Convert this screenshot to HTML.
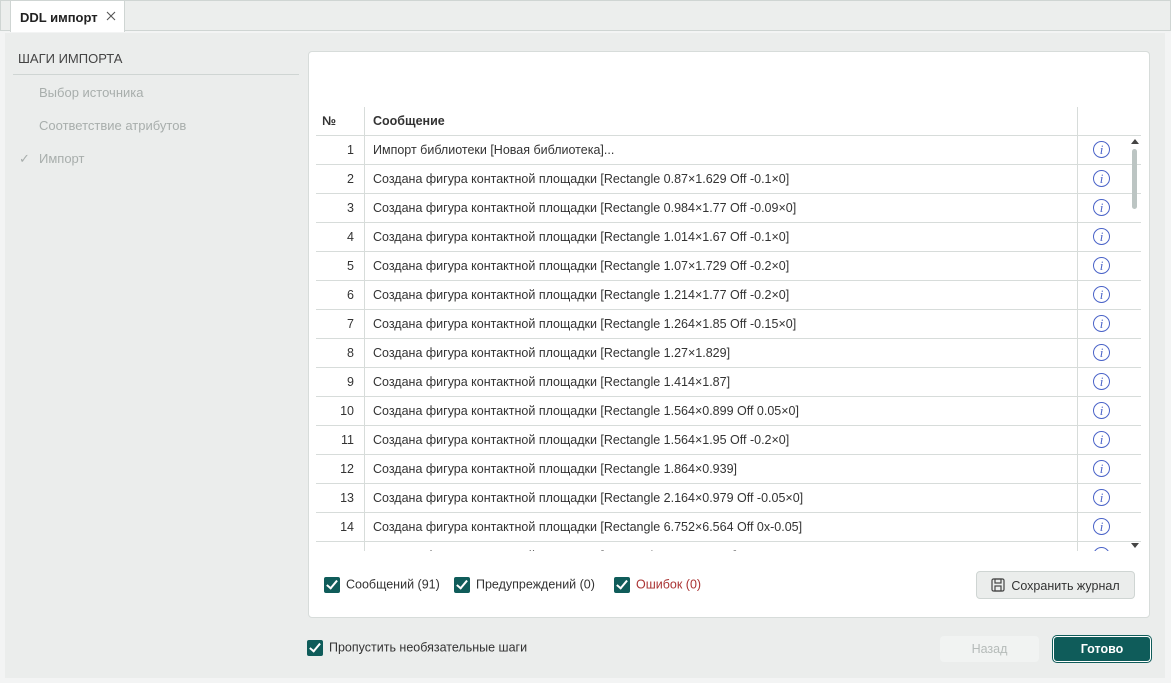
<!DOCTYPE html>
<html><head><meta charset="utf-8"><style>
*{box-sizing:border-box;margin:0;padding:0}
body{width:1171px;height:683px;background:#f3f4f4;font-family:"Liberation Sans",sans-serif;font-size:12.5px;color:#333;position:relative;overflow:hidden}
.tabbar{position:absolute;left:0;top:0;width:1171px;height:31px;background:#eceeed;border:1px solid #cfd5d3}
.tab{position:absolute;left:9px;top:0;width:115px;height:31px;background:#fff;border-left:1px solid #cfd5d3;border-right:1px solid #cfd5d3;font-weight:bold;font-size:13px;color:#222;padding:9px 0 0 9px}
.tab svg{position:absolute;left:95px;top:10px}
.main{position:absolute;left:5px;top:33px;width:1160px;height:645px;background:#ebedec}
.steps{position:absolute;left:18px;top:51px;font-size:13px;color:#444}
.line{position:absolute;left:13px;top:74px;width:286px;height:1px;background:#cfd5d3}
.step{position:absolute;left:39px;font-size:13px;color:#a8aeac}
.panel{position:absolute;left:308px;top:51px;width:842px;height:567px;background:#fff;border:1px solid #d7dcda;border-radius:4px}
.clip{position:absolute;left:316px;top:107px;width:825px;height:444px;overflow:hidden}
.r{position:relative;height:29px;border-bottom:1px solid #d7dcda;white-space:nowrap;line-height:28px}
.r.h{height:29px;font-weight:bold}
.n{position:absolute;left:0;top:0;width:49px;height:100%;text-align:right;padding-right:10px;border-right:1px solid #d7dcda}
.h .n{text-align:left;padding-left:6px}
.m{position:absolute;left:57px;top:0}
.vl{position:absolute;left:761px;top:0;width:1px;height:100%;background:#d7dcda}
.i{position:absolute;left:777px;top:5px;width:17px;height:17px;border:1px solid #4a63c8;border-radius:50%;font:italic 13px "Liberation Serif",serif;color:#4a63c8;text-align:center;line-height:16px}
.sb{position:absolute;left:1132px;top:149px;width:5px;height:60px;background:#bcc5c3;border-radius:3px}
.cb{display:inline-block;width:16px;height:16px;background:#0f5c5a;border-radius:2px;vertical-align:middle;position:relative}
.cb:after{content:"";position:absolute;left:5px;top:1px;width:4px;height:9px;border:solid #fff;border-width:0 2px 2px 0;transform:rotate(40deg)}
.chk{position:absolute;top:577px;font-size:12.5px}
.chk .cb{margin-right:6px}
.btn{position:absolute;border-radius:4px;font-size:12.5px;text-align:center}
</style></head><body>
<div class="tabbar"><div class="tab">DDL импорт<svg width="10" height="10" viewBox="0 0 10 10"><path d="M1 1L9 9M9 1L1 9" stroke="#555" stroke-width="1.1"/></svg></div></div>
<div class="main"></div>
<div class="steps">ШАГИ ИМПОРТА</div>
<div class="line"></div>
<div class="step" style="top:85px">Выбор источника</div>
<div class="step" style="top:118px">Соответствие атрибутов</div>
<div class="step" style="top:151px"><span style="position:absolute;left:-20px">✓</span>Импорт</div>
<div class="panel"></div>
<div class="clip">
<div class="r h"><span class="n">№</span><span class="m">Сообщение</span><span class="vl"></span></div>
<div class="r"><span class="n">1</span><span class="m">Импорт библиотеки [Новая библиотека]...</span><span class="vl"></span><span class="i">i</span></div>
<div class="r"><span class="n">2</span><span class="m">Создана фигура контактной площадки [Rectangle 0.87×1.629 Off -0.1×0]</span><span class="vl"></span><span class="i">i</span></div>
<div class="r"><span class="n">3</span><span class="m">Создана фигура контактной площадки [Rectangle 0.984×1.77 Off -0.09×0]</span><span class="vl"></span><span class="i">i</span></div>
<div class="r"><span class="n">4</span><span class="m">Создана фигура контактной площадки [Rectangle 1.014×1.67 Off -0.1×0]</span><span class="vl"></span><span class="i">i</span></div>
<div class="r"><span class="n">5</span><span class="m">Создана фигура контактной площадки [Rectangle 1.07×1.729 Off -0.2×0]</span><span class="vl"></span><span class="i">i</span></div>
<div class="r"><span class="n">6</span><span class="m">Создана фигура контактной площадки [Rectangle 1.214×1.77 Off -0.2×0]</span><span class="vl"></span><span class="i">i</span></div>
<div class="r"><span class="n">7</span><span class="m">Создана фигура контактной площадки [Rectangle 1.264×1.85 Off -0.15×0]</span><span class="vl"></span><span class="i">i</span></div>
<div class="r"><span class="n">8</span><span class="m">Создана фигура контактной площадки [Rectangle 1.27×1.829]</span><span class="vl"></span><span class="i">i</span></div>
<div class="r"><span class="n">9</span><span class="m">Создана фигура контактной площадки [Rectangle 1.414×1.87]</span><span class="vl"></span><span class="i">i</span></div>
<div class="r"><span class="n">10</span><span class="m">Создана фигура контактной площадки [Rectangle 1.564×0.899 Off 0.05×0]</span><span class="vl"></span><span class="i">i</span></div>
<div class="r"><span class="n">11</span><span class="m">Создана фигура контактной площадки [Rectangle 1.564×1.95 Off -0.2×0]</span><span class="vl"></span><span class="i">i</span></div>
<div class="r"><span class="n">12</span><span class="m">Создана фигура контактной площадки [Rectangle 1.864×0.939]</span><span class="vl"></span><span class="i">i</span></div>
<div class="r"><span class="n">13</span><span class="m">Создана фигура контактной площадки [Rectangle 2.164×0.979 Off -0.05×0]</span><span class="vl"></span><span class="i">i</span></div>
<div class="r"><span class="n">14</span><span class="m">Создана фигура контактной площадки [Rectangle 6.752×6.564 Off 0x-0.05]</span><span class="vl"></span><span class="i">i</span></div>
<div class="r"><span class="n">15</span><span class="m">Создана фигура контактной площадки [Rectangle 6.780×6.964]</span><span class="vl"></span><span class="i">i</span></div>
</div>
<div class="sb"></div>
<div style="position:absolute;left:1131px;top:139px;width:0;height:0;border:4px solid transparent;border-bottom:5px solid #444;border-top:0"></div>
<div style="position:absolute;left:1131px;top:543px;width:0;height:0;border:4px solid transparent;border-top:5px solid #444;border-bottom:0"></div>
<div class="chk" style="left:324px"><span class="cb"></span>Сообщений (91)</div>
<div class="chk" style="left:454px"><span class="cb"></span>Предупреждений (0)</div>
<div class="chk" style="left:614px"><span class="cb"></span><span style="color:#a33">Ошибок (0)</span></div>
<div class="btn" style="left:976px;top:571px;width:159px;height:28px;background:#ebedec;border:1px solid #cfd5d3;padding-top:6px">
<svg width="14" height="14" viewBox="0 0 14 14" style="vertical-align:-2px;margin-right:6px"><rect x="1" y="1" width="12" height="12" rx="1.5" fill="none" stroke="#444" stroke-width="1.2"/><rect x="4" y="1" width="6" height="4" fill="none" stroke="#444" stroke-width="1.2"/><rect x="4" y="8" width="6" height="5" fill="none" stroke="#444" stroke-width="1.2"/></svg>Сохранить журнал</div>
<div class="chk" style="left:307px;top:640px"><span class="cb"></span>Пропустить необязательные шаги</div>
<div class="btn" style="left:940px;top:636px;width:99px;height:26px;background:#f1f3f2;color:#b5bbb9;padding-top:6px">Назад</div>
<div class="btn" style="left:1053px;top:636px;width:98px;height:26px;background:#0f5c5a;color:#fff;font-weight:bold;padding-top:6px;box-shadow:0 0 0 1px #0f5c5a,inset 0 0 0 1px #fff">Готово</div>
</body></html>
